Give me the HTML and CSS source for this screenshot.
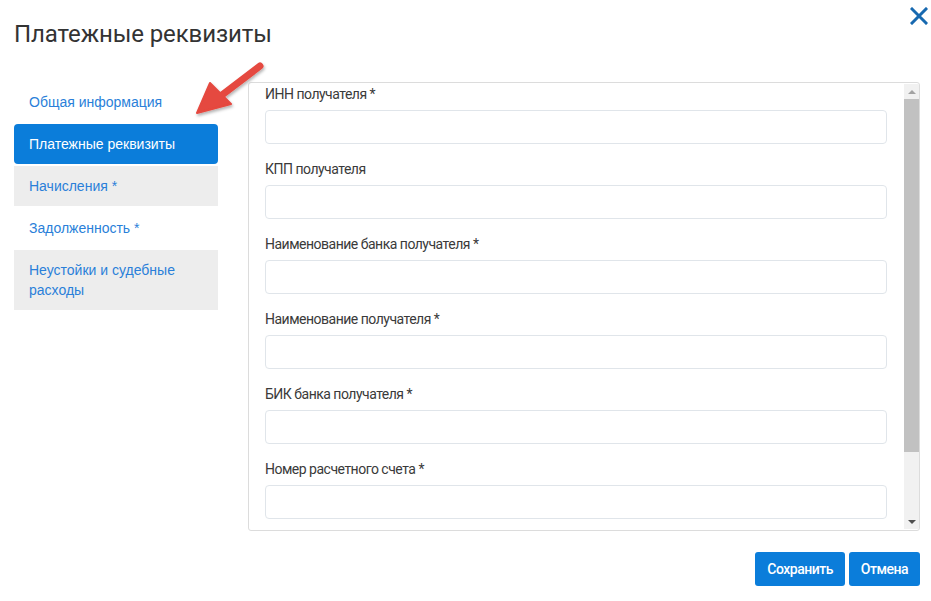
FILE: index.html
```html
<!DOCTYPE html>
<html lang="ru">
<head>
    <meta charset="UTF-8">
    <meta name="viewport" content="width=device-width, initial-scale=1.0">
    <title>Платежные реквизиты</title>
    <link rel="stylesheet" href="styles.css">
</head>
<body>
    <div class="modal">
        <div class="modal-header">
            <h1>Платежные реквизиты</h1>
            <button class="close" type="button" aria-label="Закрыть">
                <svg width="18" height="18" viewBox="0 0 18 18">
                    <path d="M2 2 L16 16 M16 2 L2 16" stroke="#1769b0" stroke-width="3" stroke-linecap="square"/>
                </svg>
            </button>
        </div>
        <div class="modal-body">
            <ul class="tabs">
                <li class="tab">Общая информация</li>
                <li class="tab active">Платежные реквизиты</li>
                <li class="tab shaded">Начисления *</li>
                <li class="tab">Задолженность *</li>
                <li class="tab shaded">Неустойки и судебные расходы</li>
            </ul>
            <div class="panel">
                <form class="fields">
                    <label>ИНН получателя *</label>
                    <input type="text">
                    <label>КПП получателя</label>
                    <input type="text">
                    <label>Наименование банка получателя *</label>
                    <input type="text">
                    <label>Наименование получателя *</label>
                    <input type="text">
                    <label>БИК банка получателя *</label>
                    <input type="text">
                    <label>Номер расчетного счета *</label>
                    <input type="text">
                </form>
                <div class="scrollbar">
                    <span class="scroll-btn up"></span>
                    <div class="scroll-track"><span class="scroll-thumb"></span></div>
                    <span class="scroll-btn down"></span>
                </div>
            </div>
            <!-- стрелка-подсказка на активную вкладку -->
            <svg class="pointer" width="80" height="64" viewBox="0 0 80 64">
                <defs>
                    <filter id="sh" x="-20%" y="-20%" width="140%" height="140%">
                        <feDropShadow dx="1" dy="2" stdDeviation="1.5" flood-color="#000" flood-opacity="0.3"/>
                    </filter>
                </defs>
                <g filter="url(#sh)" fill="#e5483f" stroke="#e5483f">
                    <line x1="66" y1="6" x2="24" y2="38" stroke-width="7" stroke-linecap="round"/>
                    <polygon points="3,53 16,23 37,44" stroke-width="2" stroke-linejoin="round"/>
                </g>
            </svg>
        </div>
        <div class="modal-footer">
            <button class="btn" type="button">Сохранить</button>
            <button class="btn" type="button">Отмена</button>
        </div>
    </div>
</body>
</html>
```

FILE: styles.css
```css
body {
    margin: 0;
    background: #fff;
    font-family: Roboto, "Liberation Sans", sans-serif;
    color: #333;
}
.modal {
    width: 931px;
    height: 601px;
    box-sizing: border-box;
    padding: 0 11px 0 14px;
    display: flex;
    flex-direction: column;
}
.modal-header {
    display: flex;
    justify-content: space-between;
    align-items: flex-start;
    height: 82px;
}
h1 {
    margin: 19px 0 0;
    font-size: 24px;
    font-weight: 400;
    line-height: 30px;
    letter-spacing: -0.1px;
    color: #333;
}
.close {
    margin: 7px -8px 0 0;
    padding: 0;
    border: none;
    background: none;
    cursor: pointer;
}
.modal-body {
    position: relative;
    display: flex;
    gap: 30px;
    height: 449px;
}
.tabs {
    list-style: none;
    margin: 0;
    padding: 0;
    width: 204px;
    display: flex;
    flex-direction: column;
    gap: 2px;
    font-family: "Liberation Sans", Arial, sans-serif;
    font-size: 14px;
}
.tab {
    padding: 10px 15px;
    line-height: 20px;
    color: #2a7fd9;
}
.tab.shaded {
    background: #ededed;
}
.tab.active {
    background: #0b7dda;
    color: #fff;
    border-radius: 4px;
}
.panel {
    flex: 1;
    display: flex;
    border: 1px solid #dcdcdc;
    border-radius: 3px;
    padding: 1px 0 1px 16px;
    overflow: hidden;
}
.fields {
    flex: 1;
    display: flex;
    flex-direction: column;
    padding-right: 17px;
}
.fields label {
    font-size: 14px;
    line-height: 20px;
    letter-spacing: -0.5px;
    color: #3a3a3a;
    margin-top: 15px;
    margin-bottom: 6px;
}
.fields label:first-child {
    margin-top: 0;
}
.fields input {
    height: 34px;
    box-sizing: border-box;
    border: 1px solid #e0e5ea;
    border-radius: 4px;
    padding: 6px 10px;
    font: inherit;
}
/* полоса прокрутки панели */
.scrollbar {
    width: 15px;
    display: flex;
    flex-direction: column;
    background: #f1f1f1;
}
.scroll-btn {
    height: 15px;
    display: flex;
    justify-content: center;
    align-items: center;
}
.scroll-btn::before {
    content: "";
    border-left: 4px solid transparent;
    border-right: 4px solid transparent;
}
.scroll-btn.up::before {
    border-bottom: 4px solid #a3a3a3;
}
.scroll-btn.down::before {
    border-top: 4px solid #505050;
}
.scroll-track {
    flex: 1;
}
.scroll-thumb {
    display: block;
    height: 353px;
    background: #c1c1c1;
}
.pointer {
    position: absolute;
    left: 180px;
    top: -22px;
}
.modal-footer {
    display: flex;
    justify-content: flex-end;
    gap: 4px;
    padding-top: 21px;
}
.btn {
    height: 34px;
    padding: 0 12px;
    border: none;
    border-radius: 3px;
    background: #0b7dda;
    color: #fff;
    font-family: Roboto, sans-serif;
    font-size: 14px;
    font-weight: 500;
    letter-spacing: -0.5px;
    cursor: pointer;
}
```
